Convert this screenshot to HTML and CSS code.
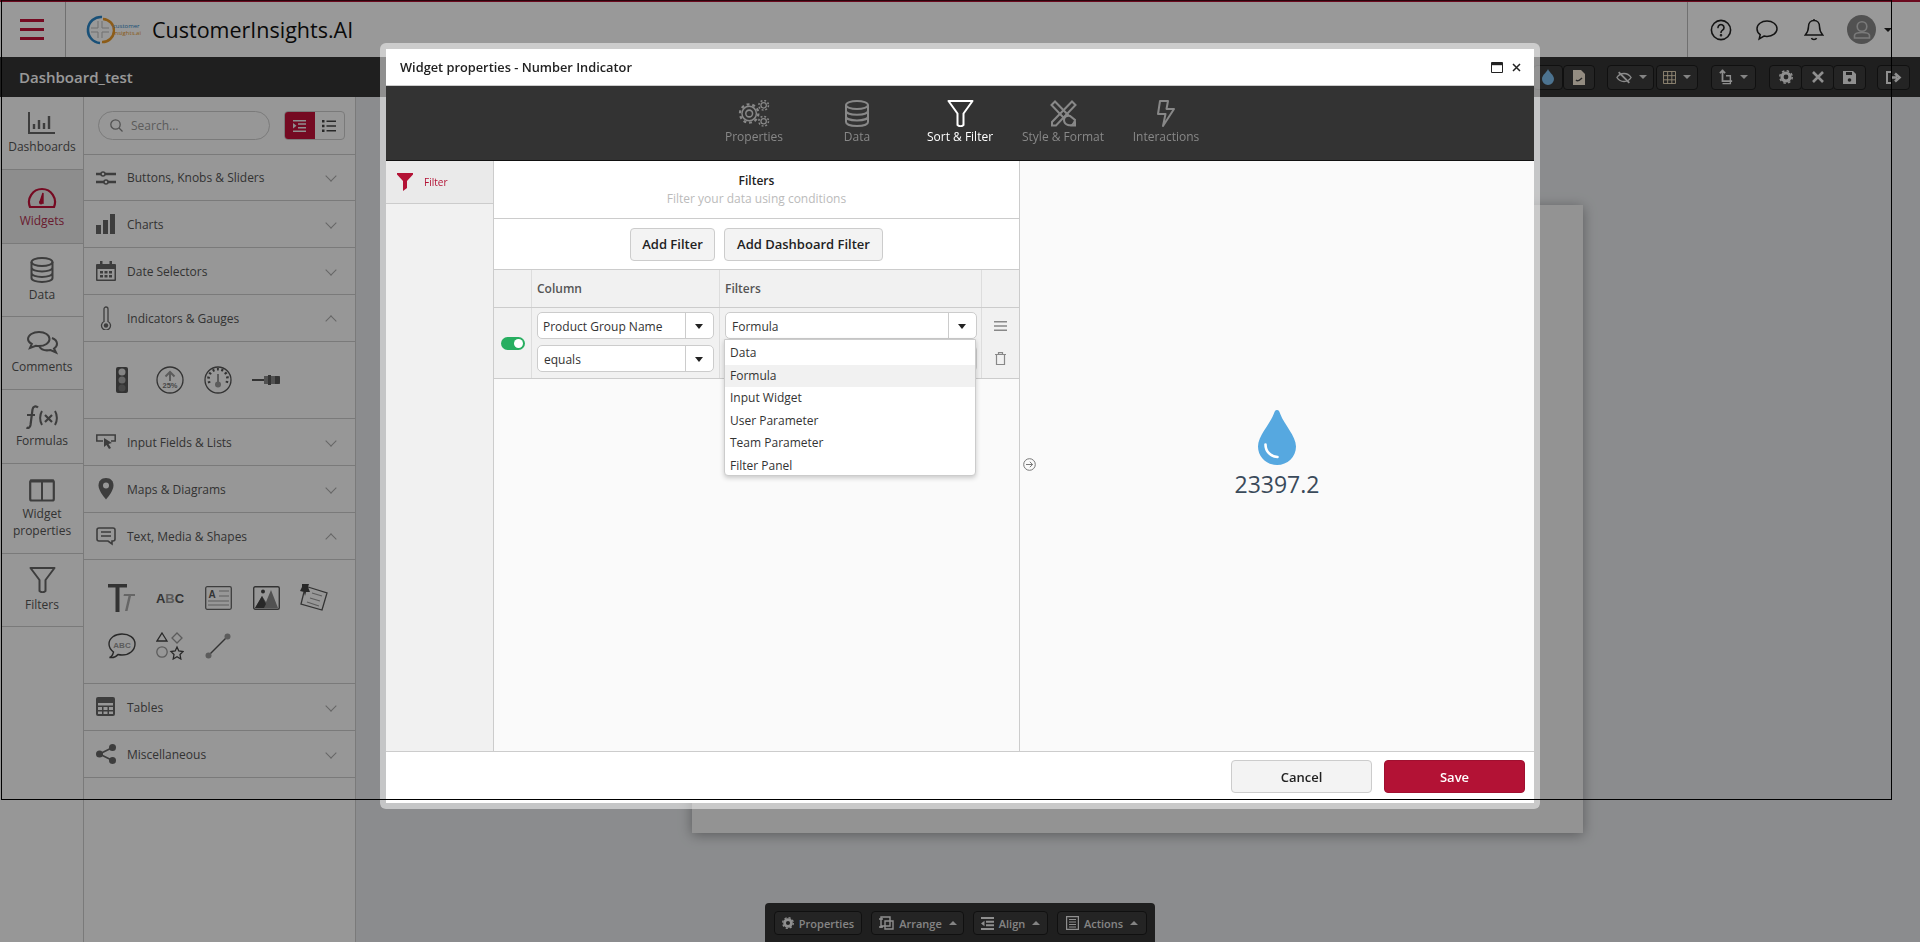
FILE: index.html
```html
<!DOCTYPE html>
<html lang="en">
<head>
<meta charset="utf-8">
<title>CustomerInsights.AI</title>
<link rel="stylesheet" href="styles.css">
</head>
<body>
<div class="app">
  <header class="topbar">
    <div class="burger-cell"><svg width="24" height="22" viewBox="0 0 24 22"><path d="M0 0h24v3H0zM0 9h24v3H0zM0 18h24v3H0z" fill="#c41239"/></svg></div>
    <div class="brand">
      <svg class="logo-mark" width="30" height="30" viewBox="0 0 30 30" fill="none"><path d="M17 2A13 13 0 0 0 15 28" stroke="#2a86c8" stroke-width="2.6"/><path d="M18 4A11 11 0 0 1 17 27" stroke="#e99a28" stroke-width="2.6"/><path d="M6 13h7V6M6 17h7v6M24 13h-7V6M24 17h-7v6" stroke="#bbb" stroke-width="1"/></svg>
      <div class="logo-text"><span class="logo-a">customer</span><span class="logo-b">insights.ai</span></div>
      <div class="brand-name">CustomerInsights.AI</div>
    </div>
    <div class="top-actions">
      <svg width="22" height="22" viewBox="0 0 22 22" fill="none" stroke="#222" stroke-width="1.6"><circle cx="11" cy="11" r="9.6"/><path d="M8 8.6a3 3 0 1 1 4.6 2.5c-1 .7-1.6 1.1-1.6 2.4" stroke-linecap="round"/><circle cx="11" cy="16.2" r=".5"/></svg>
      <svg width="22" height="22" viewBox="0 0 22 22" fill="none" stroke="#222" stroke-width="1.5"><path d="M11 2c5.6 0 10 3.4 10 7.7s-4.4 7.700-10 7.700c-1.100 0-2.100-.1-3-.4L3.200 20l1-4.300C2.200 14.300 1 12.100 1 9.700 1 5.400 5.400 2 11 2z"/></svg>
      <svg width="20" height="24" viewBox="0 0 20 24" fill="none" stroke="#222" stroke-width="1.5"><path d="M10 2.500c3.500 0 5.500 2.600 5.500 6 0 4.500 1.500 6.500 3.200 8.500H1.300C3 15 4.500 13 4.500 8.500c0-3.400 2-6 5.500-6zM10 1v1.500M7.500 20c.5 2 4.500 2 5 0"/></svg>
      <div class="avatar"><svg width="28" height="28" viewBox="0 0 28 28" fill="none" stroke="#ccc" stroke-width="1.600"><circle cx="14" cy="10.500" r="4.800"/><path d="M6.500 22v-2.500c0-1.800 2.500-3 7.500-3s7.500 1.200 7.500 3V22z"/></svg></div>
      <span class="caret-dark"></span>
    </div>
  </header>

  <div class="dashbar">
    <div class="dash-title">Dashboard_test</div>
    <div class="dash-tools">
      <div class="tgroup">
        <button class="tbtn w-drop"><svg width="12" height="16" viewBox="0 0 12 16"><path d="M6 0c1 3 6 6 6 10a6 6 0 0 1-12 0C0 6 5 3 6 0z" fill="#7fc0f0"/></svg></button>
        <button class="tbtn w-file"><svg width="12" height="15" viewBox="0 0 12 15"><path d="M0 0h8l4 4v11H0z" fill="#f6ead8"/><path d="M3 10c2 2 4 0 6-2" stroke="#444" fill="none" stroke-width="1.500"/></svg></button>
      </div>
      <div class="tgroup">
        <button class="tbtn w-eye"><svg width="16" height="13" viewBox="0 0 18 14" fill="none" stroke="#e8e8e8" stroke-width="1.500"><path d="M1 7c4-6 12-6 16 0-4 6-12 6-16 0z"/><path d="M3 1l12 12" stroke-width="2"/></svg><span class="caret-light"></span></button>
        <button class="tbtn w-grid"><svg width="13" height="13" viewBox="0 0 14 14" fill="none" stroke="#f5e4c4" stroke-width="1"><path d="M.5.500h13v13H.500zM.5 5h13M.5 9.500h13M5 .5v13M9.500.5v13"/></svg><span class="caret-light"></span></button>
      </div>
      <div class="tgroup">
        <button class="tbtn w-layer"><svg width="14" height="17" viewBox="0 0 16 18" fill="none" stroke="#eee" stroke-width="2"><path d="M4 0v13h11M1 4l3-3 3 3"/><path d="M8 7h5v9H4" stroke-width="1.600"/></svg><span class="caret-light"></span></button>
      </div>
      <div class="tgroup">
        <button class="tbtn w-icon"><svg width="14" height="14" viewBox="0 0 14 14"><circle cx="7" cy="7" r="4" fill="none" stroke="#eee" stroke-width="3.200"/><circle cx="7" cy="7" r="6.200" fill="none" stroke="#eee" stroke-width="1.500" stroke-dasharray="2.500 2.360"/></svg></button>
        <button class="tbtn w-icon"><svg width="12" height="12" viewBox="0 0 12 12" stroke="#eee" stroke-width="2.600"><path d="M1 1l10 10M11 1L1 11"/></svg></button>
        <button class="tbtn w-icon"><svg width="13" height="13" viewBox="0 0 13 13"><path d="M0 0h10l3 3v10H0z" fill="#eee"/><path d="M3 1h6v3H3z" fill="#3a3a3a"/><circle cx="6.500" cy="9" r="1.800" fill="#3a3a3a"/></svg></button>
      </div>
      <div class="tgroup">
        <button class="tbtn w-exit"><svg width="16" height="13" viewBox="0 0 16 13" fill="none" stroke="#eee" stroke-width="2"><path d="M5 1H1v11h4"/><path d="M5 6.500h6M9 2.500l4.500 4-4.500 4" stroke-width="2.600"/></svg></button>
      </div>
    </div>
  </div>

  <div class="workspace">
    <nav class="rail">
      <div class="rail-item h73"><svg width="28" height="24" viewBox="0 0 28 24" fill="none" stroke="#666"><path d="M1 1v21h26" stroke-width="2"/><path d="M6 18v-5M11 18V9M16 18v-6M21 18V5" stroke-width="2.400"/></svg><span>Dashboards</span></div>
      <div class="rail-item h74 active"><svg width="30" height="24" viewBox="0 0 30 24" fill="none" stroke="#c41239"><path d="M3 22A13 13 0 1 1 27 22z" stroke-width="2.200"/><path d="M13 17l3-9 0 10z" fill="#c41239" stroke-width="1.400"/><circle cx="14" cy="17.500" r="2" fill="#c41239" stroke="none"/></svg><span>Widgets</span></div>
      <div class="rail-item h73"><svg width="24" height="26" viewBox="0 0 24 26" fill="none" stroke="#666" stroke-width="2"><ellipse cx="12" cy="5" rx="10.500" ry="4"/><path d="M1.500 5v16c0 2.400 4.700 4 10.500 4s10.500-1.600 10.500-4V5M1.500 10.500c0 2.400 4.700 4 10.500 4s10.500-1.600 10.500-4M1.500 16c0 2.400 4.700 4 10.500 4s10.500-1.600 10.500-4"/></svg><span>Data</span></div>
      <div class="rail-item h73"><svg width="31" height="24" viewBox="0 0 31 24" fill="none" stroke="#666" stroke-width="2"><path d="M12 1c6 0 10.500 3 10.500 7s-4.500 7-10.500 7c-1.200 0-2.200-.1-3.200-.3L3 17l1.800-4C2.500 11.800 1 10 1 8c0-4 5-7 11-7z"/><path d="M25 7c3 1.200 5 3.200 5 5.800 0 2-1.200 3.600-3 4.700l2 4-5.500-2.500c-5 1-9.500-.5-11.500-4"/></svg><span>Comments</span></div>
      <div class="rail-item h74"><svg width="34" height="24" viewBox="0 0 34 24" fill="none" stroke="#666"><path d="M13 2.500C11 .5 8 1 7.500 4.500L5.500 20c-.5 3-2.500 3.500-4 2.500M2 10h8" stroke-width="2.200"/><path d="M17 6c-2.500 4-2.500 10 0 14M30 6c2.500 4 2.500 10 0 14" stroke-width="2"/><path d="M20 10l7 7M27 10l-7 7" stroke-width="2.200"/></svg><span>Formulas</span></div>
      <div class="rail-item h90"><svg width="26" height="23" viewBox="0 0 26 23" fill="none" stroke="#666"><rect x="1.200" y="1.500" width="23.600" height="20" rx="1.500" stroke-width="2.200"/><path d="M1 2h24" stroke-width="3"/><path d="M13 2v20" stroke-width="2"/></svg><span>Widget<br>properties</span></div>
      <div class="rail-item h73"><svg width="27" height="26" viewBox="0 0 27 26" fill="none" stroke="#666" stroke-width="2"><path d="M1.500 1h24L16.500 13v11c-1.800 1.500-4.200 1.500-6 0V13z" stroke-linejoin="round"/></svg><span>Filters</span></div>
    </nav>

    <aside class="panel">
      <div class="panel-top">
        <div class="search"><svg width="13" height="13" viewBox="0 0 13 13" fill="none" stroke="#888" stroke-width="1.300"><circle cx="5.500" cy="5.500" r="4.700"/><path d="M9 9l3.500 3.500"/></svg><span>Search...</span></div>
        <div class="view-toggle">
          <div class="vt on"><svg width="13" height="12" viewBox="0 0 13 12" fill="#eee"><path d="M0 0h13v1.500H0zM5 3.300h8v1.500H5zM5 7h8v1.500H5zM0 10.500h13V12H0zM0 3l3.500 2.700L0 8.500z"/></svg></div>
          <div class="vt"><svg width="14" height="12" viewBox="0 0 14 12" fill="#444"><path d="M0 0h2.500v2.500H0zM4.500.5H14v1.500H4.500zM0 4.700h2.500v2.500H0zM4.500 5.200H14v1.500H4.500zM0 9.500h2.500V12H0zM4.500 10H14v1.500H4.500z"/></svg></div>
        </div>
      </div>

      <div class="acc"><svg width="20" height="14" viewBox="0 0 20 14" fill="none" stroke="#666"><path d="M0 3h5M9 3h11M0 11h8M12 11h8" stroke-width="2.400"/><circle cx="7" cy="3" r="2" stroke-width="1.500"/><circle cx="10" cy="11" r="2" stroke-width="1.500"/></svg><span>Buttons, Knobs &amp; Sliders</span><i class="chev"></i></div>
      <div class="acc"><svg width="20" height="20" viewBox="0 0 20 20" fill="#666"><path d="M0 11h5v9H0zM7 6h5v14H7zM14 0h5v20h-5z"/></svg><span>Charts</span><i class="chev"></i></div>
      <div class="acc"><svg width="20" height="20" viewBox="0 0 20 20"><path d="M1 3h18a1 1 0 0 1 1 1v15a1 1 0 0 1-1 1H1a1 1 0 0 1-1-1V4a1 1 0 0 1 1-1z" fill="#666"/><path d="M1.500 8h17v10.500h-17z" fill="#fcfcfc"/><path d="M4 0h2.500v5H4zM13.500 0H16v5h-2.500zM4 10h3v2.500H4zM8.500 10h3v2.500h-3zM13 10h3v2.500h-3zM4 14h3v2.500H4zM8.500 14h3v2.500h-3zM13 14h3v2.500h-3z" fill="#666"/></svg><span>Date Selectors</span><i class="chev"></i></div>
      <div class="acc"><svg width="20" height="24" viewBox="0 0 20 24" fill="none" stroke="#666" stroke-width="1.300"><path d="M8 15.500V3a2 2 0 0 1 4 0v12.500a4.500 4.500 0 1 1-4 0z"/><circle cx="10" cy="19.500" r="2.200" fill="#666" stroke="none"/></svg><span>Indicators &amp; Gauges</span><i class="chev up"></i></div>
      <div class="acc-body">
        <div class="ico"><svg width="12" height="26" viewBox="0 0 12 26"><rect width="12" height="26" rx="2" fill="#555"/><circle cx="6" cy="5" r="3.500" fill="#ddd"/><circle cx="6" cy="13" r="3.500" fill="#aaa"/><circle cx="6" cy="21" r="3.500" fill="#777"/></svg></div>
        <div class="ico"><svg width="28" height="28" viewBox="0 0 28 28" fill="none"><circle cx="14" cy="14" r="13" stroke="#555" stroke-width="1.300"/><path d="M14 15V6M9.500 10.500L14 6l4.500 4.500" stroke="#999" stroke-width="2"/><text x="14" y="22" text-anchor="middle" class="pct">25%</text></svg></div>
        <div class="ico"><svg width="28" height="28" viewBox="0 0 28 28" fill="none"><circle cx="14" cy="14" r="13" stroke="#555" stroke-width="1.300"/><path d="M5.500 17A9.500 9.500 0 1 1 22.500 17" stroke="#555" stroke-width="2.600" stroke-dasharray="2 2.500"/><path d="M14 8v9" stroke="#999" stroke-width="2"/><circle cx="14" cy="18.500" r="3" fill="#999"/></svg></div>
        <div class="ico"><svg width="28" height="10" viewBox="0 0 28 10"><path d="M0 4h12v2H0z" fill="#555"/><path d="M12 1h16v8H12z" fill="#888"/><path d="M16 0h3v10h-3z" fill="#555"/><path d="M23 1h3a2 2 0 0 1 2 2v4a2 2 0 0 1-2 2h-3z" fill="#555"/></svg></div>
      </div>
      <div class="acc"><svg width="20" height="16" viewBox="0 0 20 16" fill="none" stroke="#666" stroke-width="1.500"><path d="M7 7H.8V1h18.400v6H15"/><path d="M8 4l8 5-3.500 1 2.500 4-2 1-2.500-4L8 13z" fill="#666" stroke="none"/></svg><span>Input Fields &amp; Lists</span><i class="chev"></i></div>
      <div class="acc"><svg width="20" height="22" viewBox="0 0 20 22"><path d="M10 0C5 0 2.500 3.500 2.500 7.500 2.500 12 7 18 10 21.500c3-3.500 7.500-9.500 7.500-14C17.500 3.500 15 0 10 0z" fill="#666"/><circle cx="10" cy="7.500" r="3" fill="#fcfcfc"/></svg><span>Maps &amp; Diagrams</span><i class="chev"></i></div>
      <div class="acc"><svg width="20" height="19" viewBox="0 0 20 19" fill="none" stroke="#666" stroke-width="1.600"><path d="M3 1h14a2 2 0 0 1 2 2v9a2 2 0 0 1-2 2h-1v3l-4-3H3a2 2 0 0 1-2-2V3a2 2 0 0 1 2-2zM5 5h10M5 9h10"/></svg><span>Text, Media &amp; Shapes</span><i class="chev up"></i></div>
      <div class="acc-body tight">
        <div class="ico"><svg width="28" height="28" viewBox="0 0 28 28"><path d="M0 0h19v3.500h-7.500V28H7.500V3.500H0z" fill="#555"/><path d="M16 10h11v2h-4l-3.500 15h-2.500l3.500-15h-5z" fill="#aaa"/></svg></div>
        <div class="ico ico-text abc">A<b>B</b>C</div>
        <div class="ico"><svg width="27" height="24" viewBox="0 0 27 24" fill="none" stroke="#666"><rect x=".7" y=".7" width="25.600" height="22.600" rx="1.500" stroke-width="1.300"/><path d="M14 5h10M14 10h10M3 15h21M3 19h21" stroke="#999" stroke-width="1.200"/><text x="3.500" y="12" class="letter">A</text></svg></div>
        <div class="ico"><svg width="27" height="24" viewBox="0 0 27 24"><rect x=".7" y=".7" width="25.600" height="22.600" rx="1.500" fill="none" stroke="#555" stroke-width="1.400"/><path d="M2 22l7-12 4 6 5-12 7 18z" fill="#888"/><path d="M2 22l7-12 4 8-2 4z" fill="#444"/><circle cx="10" cy="5.500" r="2" fill="#444"/></svg></div>
        <div class="ico"><svg width="28" height="28" viewBox="0 0 28 28" fill="none" stroke="#555"><path d="M8 3l19 6-5 17L1 20 4 8" stroke-width="1.300"/><path d="M12 9l10 3M10 14l10 3M7 18l12 4" stroke="#999" stroke-width="1.200"/><path d="M2 0h7l-1 3 2 5-4 0-1 4-1-4-4-1 2-4z" fill="#444" stroke="none"/></svg></div>
        <div class="ico"><svg width="28" height="26" viewBox="0 0 28 26" fill="none"><path d="M14 1C7 1 1 5 1 11c0 3.500 2 6 4.500 8C5 21 3.500 24 1.500 24.500c3 .5 6.500-.5 8.500-3 1.300.3 2.700.5 4 .5 7 0 13-4.500 13-11S21 1 14 1z" stroke="#444" stroke-width="1.400"/><text x="14" y="15" text-anchor="middle" class="abc-small">ABC</text></svg></div>
        <div class="ico"><svg width="28" height="28" viewBox="0 0 28 28" fill="none" stroke-width="1.300"><path d="M6 1l5 8H1z" stroke="#444"/><path d="M21 1l5 5-5 5-5-5z" stroke="#999"/><circle cx="6" cy="20" r="5.200" stroke="#999"/><path d="M21 15l1.800 4 4.200.500-3 3 .8 4.500-3.800-2.200-3.800 2.200.8-4.500-3-3 4.200-.5z" stroke="#444"/></svg></div>
        <div class="ico"><svg width="26" height="26" viewBox="0 0 26 26"><path d="M4 22L22 4" stroke="#555" stroke-width="1.500"/><circle cx="3.500" cy="22.500" r="3" fill="#999"/><circle cx="22.500" cy="3.500" r="3" fill="#999"/></svg></div>
      </div>
      <div class="acc"><svg width="20" height="20" viewBox="0 0 20 20"><rect width="19" height="19" rx="2" fill="#666"/><path d="M2 6h15v2.500H2M2 10h4v3H2zM7.500 10h4v3h-4zM13 10h4v3h-4zM2 14.500h4V17H2zM7.500 14.500h4V17h-4zM13 14.500h4V17h-4z" fill="#fcfcfc"/></svg><span>Tables</span><i class="chev"></i></div>
      <div class="acc"><svg width="20" height="20" viewBox="0 0 20 20" fill="#666"><circle cx="3.500" cy="10" r="3.500"/><circle cx="16.500" cy="3.500" r="3.500"/><circle cx="16.500" cy="16.500" r="3.500"/><path d="M3.500 10l13-6.500M3.500 10l13 6.500" stroke="#666" stroke-width="1.600"/></svg><span>Miscellaneous</span><i class="chev"></i></div>
    </aside>

    <main class="canvas"><div class="sheet"></div></main>
  </div>

  <div class="float-tools">
    <button class="fbtn w-f1"><svg width="12" height="14" viewBox="0 0 14 14"><circle cx="7" cy="7" r="4" fill="none" stroke="#eee" stroke-width="3.200"/><circle cx="7" cy="7" r="6.200" fill="none" stroke="#eee" stroke-width="1.500" stroke-dasharray="2.500 2.360"/></svg><span>Properties</span></button>
    <button class="fbtn w-f2"><svg width="16" height="14" viewBox="0 0 16 14" fill="none" stroke="#eee" stroke-width="1.400"><path d="M3 1h9v9H3zM7 5h8v8H7zM1 3h4M1 11h4M3 12V9"/></svg><span>Arrange</span><i class="caret-up"></i></button>
    <button class="fbtn w-f3"><svg width="13" height="13" viewBox="0 0 13 13" fill="#eee"><path d="M0 0h13v2H0zM5 3.700h8v2H5zM5 7.300h8v2H5zM0 11h13v2H0zM0 6.500l3.500-2.700v5.400z"/></svg><span>Align</span><i class="caret-up"></i></button>
    <button class="fbtn w-f4"><svg width="13" height="14" viewBox="0 0 13 14" fill="none" stroke="#eee" stroke-width="1.200"><path d="M.6.600h11.800v12.800H.6zM3 3.500h7M3 6h7M3 8.500h7M3 11h7"/></svg><span>Actions</span><i class="caret-up"></i></button>
  </div>
</div>

<div class="overlay"></div>

<section class="modal">
  <div class="modal-title"><span>Widget properties - Number Indicator</span>
    <div class="win-btns">
      <svg width="12" height="11" viewBox="0 0 12 11" fill="none" stroke="#222"><path d="M.5.500h11v10H.5z"/><path d="M.5 2h11" stroke-width="2.400"/></svg>
      <svg width="9" height="9" viewBox="0 0 9 9" stroke="#222" stroke-width="1.500"><path d="M1 1l7 7M8 1L1 8"/></svg>
    </div>
  </div>
  <div class="modal-tabs">
    <div class="tab"><svg width="34" height="28" viewBox="0 0 34 28" fill="none" stroke="#888"><circle cx="12" cy="14" r="3.500" stroke-width="1.600"/><circle cx="12" cy="14" r="7.500" stroke-width="1.500"/><circle cx="12" cy="14" r="9.500" stroke-width="2.400" stroke-dasharray="3 2.970"/><circle cx="27" cy="5.500" r="2.800" stroke-width="1.300"/><circle cx="27" cy="5.500" r="5" stroke-width="1.600" stroke-dasharray="2 1.930"/><circle cx="27" cy="22" r="2.800" stroke-width="1.300"/><circle cx="27" cy="22" r="5" stroke-width="1.600" stroke-dasharray="2 1.930"/></svg><span>Properties</span></div>
    <div class="tab"><svg width="24" height="27" viewBox="0 0 24 27" fill="none" stroke="#888" stroke-width="2"><ellipse cx="12" cy="5" rx="11" ry="4"/><path d="M1 5v17c0 2.400 4.900 4 11 4s11-1.600 11-4V5M1 10.700c0 2.400 4.900 4 11 4s11-1.600 11-4M1 16.400c0 2.400 4.900 4 11 4s11-1.600 11-4"/></svg><span>Data</span></div>
    <div class="tab on"><svg width="27" height="27" viewBox="0 0 27 27" fill="none" stroke="#fff" stroke-width="2"><path d="M1.500 1h24L16.500 13.500V25c-1.800 1.500-4.200 1.500-6 0V13.500z" stroke-linejoin="round"/></svg><span>Sort &amp; Filter</span></div>
    <div class="tab"><svg width="27" height="27" viewBox="0 0 27 27" fill="none" stroke="#888" stroke-width="2"><path d="M1.500 5L5 1.500 25 22v3.500h-4z"/><path d="M25.500 5L22 1.500 2 22v3.500h4z"/><path d="M14 20c0-3 3-5 6-4l5 4c-1 5-4 6-7 5s-4-3-4-5z" fill="#333"/></svg><span>Style &amp; Format</span></div>
    <div class="tab"><svg width="18" height="27" viewBox="0 0 18 27" fill="none" stroke="#888" stroke-width="2"><path d="M3 1h8l-1.500 8H17L6 26l2.500-12H1z" stroke-linejoin="round"/></svg><span>Interactions</span></div>
  </div>
  <div class="modal-body">
    <div class="side">
      <div class="side-item"><svg width="16" height="18" viewBox="0 0 16 18" fill="#b31235"><path d="M0 0h16v1.500L10 8v7l-4 3V8L0 1.500z"/></svg><span>Filter</span></div>
    </div>
    <div class="editor">
      <div class="ed-head"><strong>Filters</strong><span>Filter your data using conditions</span></div>
      <div class="ed-actions"><button class="btn-light w-add">Add Filter</button><button class="btn-light w-add-d">Add Dashboard Filter</button></div>
      <div class="tbl-head"><div class="c1"></div><div class="c2">Column</div><div class="c3">Filters</div><div class="c4"></div></div>
      <div class="tbl-row">
        <div class="c1 cell-center"><span class="switch"></span></div>
        <div class="c2 cell-stack">
          <div class="sel t-1"><span>Product Group Name</span><i></i></div>
          <div class="sel t-2"><span>equals</span><i></i></div>
        </div>
        <div class="c3 cell-stack f-col">
          <div class="sel t-2"><span>Formula</span><i></i></div>
          <div class="sel t-2"><span></span><i></i></div>
        </div>
        <div class="c4 cell-icons">
          <svg width="13" height="10" viewBox="0 0 13 10" fill="#888"><path d="M0 0h13v1.500H0zM0 4.200h13v1.500H0zM0 8.500h13V10H0z"/></svg>
          <svg width="11" height="13" viewBox="0 0 11 13" fill="none" stroke="#888" stroke-width="1.200"><path d="M0 2.500h11M3.500 2.500V.6h4v1.900M1.500 2.500v10h8v-10"/></svg>
        </div>
      </div>
      <ul class="menu">
        <li>Data</li><li class="hl">Formula</li><li>Input Widget</li><li>User Parameter</li><li>Team Parameter</li><li>Filter Panel</li>
      </ul>
    </div>
    <div class="preview">
      <svg class="collapse" width="13" height="13" viewBox="0 0 13 13" fill="none" stroke="#777"><circle cx="6.500" cy="6.500" r="5.800"/><path d="M3 6.500h6.500M6.800 3.800l2.800 2.700-2.800 2.700"/></svg>
      <svg width="40" height="57" viewBox="0 0 40 57"><path d="M20 1c2 0 2.500 2 3.500 4.500C27 15 39 27 39 37.500 39 48 30.500 56 20 56S1 48 1 37.500C1 27 13 15 16.500 5.500 17.500 3 18 1 20 1z" fill="#56a8e0"/><path d="M8.500 35.500c0 7 5 12 12 12.500" fill="none" stroke="#fff" stroke-width="2.600" stroke-linecap="round"/></svg>
      <div class="value">23397.2</div>
    </div>
  </div>
  <div class="modal-foot"><button class="btn-cancel">Cancel</button><button class="btn-save">Save</button></div>
</section>

<div class="frame-line"></div>
</body>
</html>
```

FILE: styles.css
```css
* { box-sizing: border-box; }
html, body { margin: 0; height: 100%; overflow: hidden; }
body { font-family: "Open Sans", "Noto Sans", sans-serif; font-size: 12px; color: #333; background: #e8eaed; }
button { font-family: inherit; cursor: default; }

.app { position: relative; width: 1920px; height: 942px; display: flex; flex-direction: column; }

/* top bar */
.topbar { height: 57px; flex: none; background: #fff; border-top: 2px solid #b31235; display: flex; align-items: stretch; }
.burger-cell { width: 66px; border-right: 1px solid #bbb; padding: 17px 0 0 20px; }
.brand { display: flex; align-items: center; padding-left: 19px; flex: 1; }
.logo-text { display: flex; flex-direction: column; font-size: 6px; line-height: 6.5px; margin-left: -2px; width: 27px; }
.logo-a { color: #2a86c8; }
.logo-b { color: #e99a28; }
.brand-name { font-size: 21.5px; line-height: 30px; color: #111; margin-left: 12px; }
.top-actions { width: 233px; margin-left: auto; border-left: 1px solid #bbb; display: flex; align-items: center; padding-left: 22px; }
.top-actions svg { flex: none; }
.top-actions > svg:nth-child(2) { margin-left: 24px; }
.top-actions > svg:nth-child(3) { margin-left: 26px; }
.avatar { width: 29px; height: 29px; border-radius: 50%; background: #888; margin-left: 23px; display: flex; align-items: center; justify-content: center; }
.caret-dark { width: 0; height: 0; border: 4px solid transparent; border-top: 4px solid #222; margin: 5px 0 0 8px; }

/* dashboard bar */
.dashbar { height: 40px; flex: none; background: #343434; display: flex; align-items: center; justify-content: space-between; padding: 0 10px 0 19px; }
.dash-title { color: #fff; font-size: 15px; font-weight: 600; }
.dash-tools { display: flex; gap: 13px; }
.tgroup { display: flex; }
.tgroup:first-child { margin-right: -1px; }
.tgroup:last-child { margin-left: -2px; }
.tbtn { height: 25px; background: #3d3d3d; border: 1px solid #1b1b1b; border-radius: 4px; display: flex; align-items: center; justify-content: center; gap: 7px; padding: 0; }
.tbtn + .tbtn { margin-left: -1px; }
.w-drop { width: 30px; }
.tbtn.w-file { width: 32px; margin-left: 0; }
.w-eye { width: 47px; justify-content: flex-start; padding-left: 8px; }
.tbtn.w-grid { width: 42px; margin-left: 2px; justify-content: flex-start; padding-left: 6px; }
.w-layer { width: 45px; justify-content: flex-start; padding-left: 7px; }
.w-icon { width: 33px; }
.w-exit { width: 33px; }
.caret-light { width: 0; height: 0; border: 4px solid transparent; border-top: 4px solid #ddd; margin-top: 4px; }

/* workspace */
.workspace { flex: 1; display: flex; min-height: 0; }
.rail { width: 84px; flex: none; background: #fcfcfc; border-right: 1px solid #ccc; padding-left: 1px; }
.rail-item { display: flex; flex-direction: column; align-items: center; justify-content: center; gap: 3px; border-bottom: 1px solid #ccc; color: #555; text-align: center; font-size: 12px; line-height: 17px; }
.rail-item svg { flex: none; }
.rail-item.active { background: #ebebeb; color: #b03050; }
.h73 { height: 73px; } .h74 { height: 74px; } .h90 { height: 90px; }

.panel { width: 272px; flex: none; background: #fcfcfc; border-right: 1px solid #ccc; }
.panel-top { height: 58px; border-bottom: 1px solid #ccc; display: flex; align-items: flex-start; justify-content: space-between; padding: 14px 10px 0 14px; }
.search { width: 172px; height: 29px; border: 1px solid #ccc; border-radius: 15px; display: flex; align-items: center; gap: 8px; padding-left: 11px; color: #999; font-size: 12px; }
.view-toggle { display: flex; width: 61px; height: 29px; border: 1px solid #ccc; border-radius: 4px; overflow: hidden; }
.vt { flex: 1; display: flex; align-items: center; justify-content: center; }
.vt.on { background: #c41239; }

.acc { height: 47px; border-bottom: 1px solid #ccc; display: flex; align-items: center; padding: 0 18px 0 12px; color: #555; font-size: 12px; }
.panel-top + .acc { height: 46px; }
.acc svg { flex: none; width: 20px; }
.acc span { margin-left: 11px; flex: 1; }
.chev { width: 8px; height: 8px; border-right: 1px solid #aaa; border-bottom: 1px solid #aaa; transform: rotate(45deg); margin: -3px 2px 0 0; }
.chev.up { transform: rotate(225deg); margin-top: 5px; }
.acc-body { border-bottom: 1px solid #ccc; padding: 14px 0 14px 14px; display: grid; grid-template-columns: repeat(5, 48px); grid-auto-rows: 48px; }
.acc-body.tight { padding-bottom: 13px; }
.ico { display: flex; align-items: center; justify-content: center; }
.ico-text { font-weight: 700; font-size: 13px; color: #555; font-family: "Liberation Sans", sans-serif; }
.abc b { color: #999; }
.pct { font-size: 7.5px; font-weight: 700; fill: #777; font-family: "Liberation Sans", sans-serif; }
.letter { font-size: 10px; font-weight: 700; fill: #555; stroke: none; font-family: "Liberation Sans", sans-serif; }
.abc-small { font-size: 8px; font-weight: 700; fill: #999; font-family: "Liberation Sans", sans-serif; }

.canvas { flex: 1; min-width: 0; background: #e8eaed; padding: 108px 0 0 336px; overflow: hidden; }
.sheet { width: 891px; height: 628px; background: #f5f5f5; box-shadow: 0 2px 12px rgba(0,0,0,.35); }

.float-tools { position: absolute; left: 765px; top: 903px; width: 390px; height: 39px; background: #343434; border-radius: 4px 4px 0 0; display: flex; align-items: flex-start; gap: 9px; padding: 8px 0 0 9px; }
.fbtn { height: 24px; background: #3d3d3d; border: 1px solid #1b1b1b; border-radius: 4px; color: #ddd; font-size: 11px; font-weight: 600; display: flex; align-items: center; justify-content: center; gap: 5px; padding: 0; }
.w-f1 { width: 88px; } .w-f2 { width: 93px; } .w-f3 { width: 75px; } .w-f4 { width: 90px; }
.caret-up { width: 0; height: 0; border: 4px solid transparent; border-bottom: 4px solid #ddd; margin: -4px 0 0 2px; }

.overlay { position: fixed; inset: 0; background: rgba(0,0,0,.4); }

/* modal */
.modal { position: absolute; left: 380px; top: 43px; width: 1160px; height: 766px; border: 6px solid rgba(255,255,255,.5); border-radius: 6px; background: #fff; background-clip: padding-box; display: flex; flex-direction: column; color: #222; }
.modal-title { height: 37px; flex: none; border-bottom: 1px solid #ccc; display: flex; align-items: center; justify-content: space-between; padding: 0 13px 0 14px; font-size: 12.8px; font-weight: 600; color: #222; }
.win-btns { display: flex; align-items: center; gap: 9px; }
.modal-tabs { height: 75px; flex: none; background: #333; border-bottom: 1px solid #111; display: flex; justify-content: center; padding-top: 14px; }
.tab { width: 103px; display: flex; flex-direction: column; align-items: center; gap: 1px; color: #888; font-size: 12px; line-height: 18px; }
.tab svg { flex: none; height: 27px; }
.tab.on { color: #fff; }

.modal-body { flex: 1; display: flex; min-height: 0; }
.side { width: 108px; flex: none; background: #f1f1f1; border-right: 1px solid #ccc; }
.side-item { height: 43px; background: #eaeaea; border-bottom: 1px solid #ccc; display: flex; align-items: center; gap: 11px; padding: 0 0 0 11px; color: #b31235; font-size: 10px; }
.editor { width: 526px; flex: none; position: relative; background: #fafafa; border-right: 1px solid #ccc; }
.ed-head { height: 58px; background: #fff; border-bottom: 1px solid #ccc; display: flex; flex-direction: column; align-items: center; padding-top: 11px; line-height: 18px; }
.ed-head strong { font-size: 12px; font-weight: 600; color: #222; }
.ed-head span { font-size: 12px; color: #bbb; }
.ed-actions { height: 51px; background: #fff; border-bottom: 1px solid #ccc; display: flex; align-items: center; gap: 9px; padding: 0 0 0 136px; }
.btn-light { height: 33px; background: #f3f3f3; border: 1px solid #ccc; border-radius: 4px; font-size: 13px; font-weight: 600; color: #222; padding: 0; }
.w-add { width: 85px; } .w-add-d { width: 159px; }
.tbl-head, .tbl-row { display: grid; grid-template-columns: 38px 188px 262px 37px; background: #f1f1f1; border-bottom: 1px solid #ccc; }
.tbl-head { height: 38px; }
.tbl-head > div { border-right: 1px solid #ddd; display: flex; align-items: center; padding-left: 5px; font-size: 12px; color: #555; font-weight: 600; }
.tbl-head > div:last-child, .tbl-row > div:last-child { border-right: 0; }
.tbl-row { height: 71px; }
.tbl-row > div { border-right: 1px solid #ddd; }
.cell-center { display: flex; align-items: center; justify-content: center; }
.switch { width: 24px; height: 13px; border-radius: 7px; background: #27ae60; position: relative; display: block; }
.switch::after { content: ""; position: absolute; right: 2px; top: 2px; width: 9px; height: 9px; border-radius: 50%; background: #fff; }
.cell-stack { display: flex; flex-direction: column; gap: 6px; padding: 4px 5px 0 5px; }
.f-col { padding: 4px 4px 0 5px; }
.sel { height: 27px; background: #fff; border: 1px solid #ccc; border-radius: 5px; display: flex; align-items: center; font-size: 12px; color: #333; flex: none; }
.sel span { flex: 1; white-space: nowrap; padding-top: 1px; }
.t-1 span { padding-left: 5px; }
.t-2 span { padding-left: 6px; }
.sel i { width: 28px; height: 100%; border-left: 1px solid #ccc; position: relative; display: block; flex: none; }
.sel i::after { content: ""; position: absolute; left: 9px; top: 11px; border: 4px solid transparent; border-top: 5px solid #222; border-bottom: 0; }
.cell-icons { display: flex; flex-direction: column; align-items: center; gap: 21px; padding: 13px 0 0 0; }
.menu { position: absolute; left: 230px; top: 178px; width: 252px; height: 137px; margin: 0; padding: 2px 0 0; list-style: none; background: #fff; border: 1px solid #ccc; border-radius: 0 0 4px 4px; box-shadow: 0 2px 5px rgba(0,0,0,.2); font-size: 12px; color: #333; }
.menu li { height: 22.5px; line-height: 22.5px; padding-left: 5px; }
.menu .hl { background: #f1f1f1; }

.preview { flex: 1; position: relative; background: #fafafa; display: flex; flex-direction: column; align-items: center; padding-top: 248px; }
.collapse { position: absolute; left: 3px; top: 297px; }
.value { font-size: 23px; line-height: 32px; color: #3a4a5a; margin-top: 2px; }

.modal-foot { height: 52px; flex: none; background: #fff; border-top: 1px solid #ccc; display: flex; justify-content: flex-end; align-items: flex-start; gap: 12px; padding: 8px 9px 0 0; }
.btn-cancel, .btn-save { width: 141px; height: 33px; border-radius: 4px; font-size: 13px; font-weight: 600; padding: 0; }
.btn-cancel { background: #f3f3f3; border: 1px solid #ccc; color: #222; }
.btn-save { background: #b31235; border: 1px solid #a01030; color: #fff; }

.frame-line { position: absolute; left: 1px; top: 0; width: 1891px; height: 800px; border: 1px solid #000; border-top-color: rgba(0,0,0,.6); pointer-events: none; }
```
